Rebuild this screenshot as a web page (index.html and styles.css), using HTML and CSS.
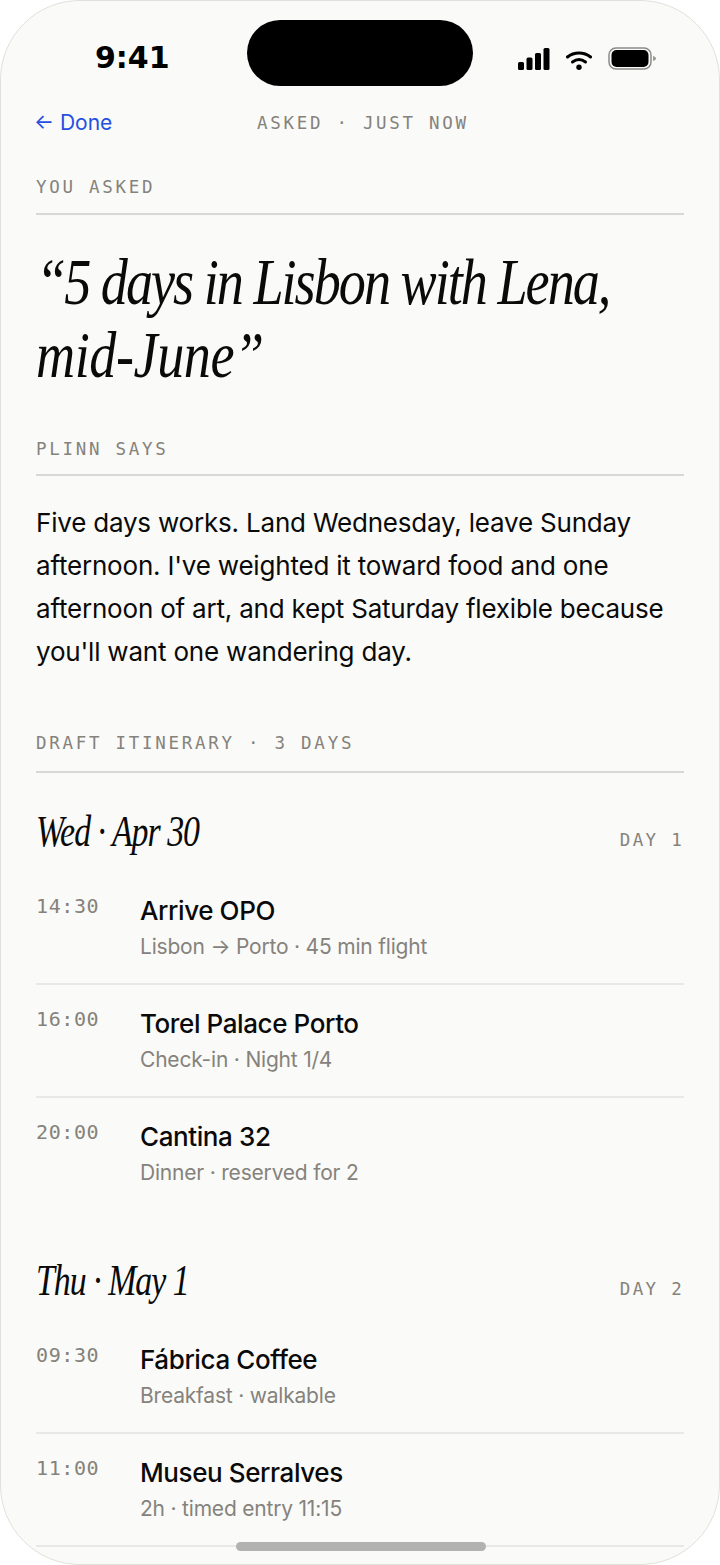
FILE: index.html
```html
<!doctype html>
<html>
<head>
<meta charset="utf-8">
<title>Plinn</title>
<link rel="stylesheet" href="styles.css">
</head>

<body>
<div class="phone">
	<div class="island"></div>
	<div class="status">
		<span class="clock">9:41</span>
		<div class="status_icons">
			<svg width="32" height="22" viewBox="0 0 32 22"><rect x="0" y="14" width="6" height="8" rx="1.500"/><rect x="8.500" y="9.500" width="6" height="12.500" rx="1.500"/><rect x="17" y="5" width="6" height="17" rx="1.500"/><rect x="25.500" y="0" width="6" height="22" rx="1.500"/></svg>
			<svg width="26" height="19" viewBox="0 0 26 19" fill="none" stroke="#000" stroke-width="3" stroke-linecap="round"><path d="M1.500 6C8 .5 18 .5 24.500 6"/><path d="M6.500 11C10.500 8 15.500 8 19.500 11"/><circle cx="13" cy="16.200" r="2.700" fill="#000" stroke="none"/></svg>
			<svg width="48" height="23" viewBox="0 0 48 23"><rect x="1" y="1" width="42" height="21" rx="7" fill="none" stroke="#8a8a88" stroke-width="1.500"/><rect x="3.500" y="3" width="37" height="17" rx="5"/><path d="M45 9c2 .5 3 1.300 3 2.500s-1 2-3 2.500z" fill="#9a9a98"/></svg>
		</div>
	</div>

	<div class="nav">
		<span class="done">← Done</span>
		<span class="nav_title">ASKED · JUST NOW</span>
	</div>

	<div class="label first">YOU ASKED</div>
	<h1 class="quote">“5 days in Lisbon with Lena, <span class="quote_end">mid-June”</span></h1>

	<div class="label says">PLINN SAYS</div>
	<p class="reply">Five days works. Land Wednesday, leave Sunday afternoon. I've weighted it toward food and one afternoon of art, and kept Saturday flexible because you'll want one wandering day.</p>

	<div class="label draft">DRAFT ITINERARY · 3 DAYS</div>

	<div class="day_head">
		<span class="day_name">Wed · Apr 30</span>
		<span class="day_num">DAY 1</span>
	</div>
	<ul class="items">
		<li><span class="time">14:30</span><div><div class="name">Arrive OPO</div><div class="sub">Lisbon → Porto · 45 min flight</div></div></li>
		<li><span class="time">16:00</span><div><div class="name">Torel Palace Porto</div><div class="sub">Check-in · Night 1/4</div></div></li>
		<li class="last"><span class="time">20:00</span><div><div class="name">Cantina 32</div><div class="sub">Dinner · reserved for 2</div></div></li>
	</ul>

	<div class="day_head second">
		<span class="day_name">Thu · May 1</span>
		<span class="day_num">DAY 2</span>
	</div>
	<ul class="items">
		<li><span class="time">09:30</span><div><div class="name">Fábrica Coffee</div><div class="sub">Breakfast · walkable</div></div></li>
		<li><span class="time">11:00</span><div><div class="name">Museu Serralves</div><div class="sub">2h · timed entry 11:15</div></div></li>
	</ul>

	<div class="home_bar"></div>
</div>
</body>
</html>
```

FILE: styles.css
```css
*{ padding:0; margin:0; box-sizing:border-box;}
html,body{ width:720px; height:1565px; overflow:hidden; background-color:#fff;}
ul{ list-style:none;}
.phone{ width:720px; height:1565px; position:relative; overflow:hidden; background-color:#fafaf8; border:1px solid #e0e0dc; border-radius:80px; padding:0 35px; font-family:"Inter","Liberation Sans",sans-serif; color:#0a0a0a;}

.island{ position:absolute; left:246px; top:19px; width:226px; height:66px; border-radius:33px; background-color:#000;}
.status{ height:98px; display:flex; justify-content:space-between; align-items:center; padding:14px 0 0 59px;}
.clock{ font-family:"DejaVu Sans",sans-serif; font-weight:bold; font-size:30px; letter-spacing:0; color:#000;}
.status_icons{ display:flex; align-items:flex-end; gap:16px; margin:3px 28px 0 0;}

.nav{ height:46px; position:relative; display:flex; align-items:center;}
.done{ font-size:21px; margin-left:-2px; color:#2450e0;}
.nav_title{ position:absolute; left:221px; top:14px; font-family:"DejaVu Sans Mono",monospace; font-size:17.5px; letter-spacing:2.7px; color:#85827c; white-space:nowrap;}

.label{ font-family:"DejaVu Sans Mono",monospace; font-size:17.5px; letter-spacing:2.72px; color:#85827c; border-bottom:2px solid #d8d8d4; line-height:24px; padding-bottom:14px;}
.first{ margin-top:30px;}
.says{ margin-top:46px; padding-bottom:13px;}
.draft{ margin-top:58px; padding-bottom:16px;}

.quote{ width:780px; transform:scaleX(.82); transform-origin:left top; font-family:"Liberation Serif",serif; font-style:italic; font-weight:normal; font-size:66px; line-height:73px; letter-spacing:-2.4px; padding-top:30px; color:#0a0a0a;}
.quote_end{ letter-spacing:-.5px;}
.reply{ font-size:26px; line-height:43px; padding-top:25px; letter-spacing:-.2px; color:#0a0a0a;}

.day_head{ display:flex; justify-content:space-between; align-items:baseline; margin-top:32px; margin-bottom:13px;}
.second{ margin-top:43px;}
.day_name{ display:inline-block; transform:scaleX(.77); transform-origin:left top; font-family:"Liberation Serif",serif; font-style:italic; font-size:44px; line-height:54px; letter-spacing:-1.300px;}
.day_num{ font-family:"DejaVu Sans Mono",monospace; font-size:17.5px; letter-spacing:2.3px; color:#85827c;}

.items li{ display:flex; border-bottom:2px solid #e8e8e5; height:113px; padding-top:21px;}
.items li.last{ border-bottom:0;}
.time{ width:104px; flex:none; font-family:"DejaVu Sans Mono",monospace; font-size:20px; letter-spacing:.6px; color:#85827c; line-height:26px;}
.name{ font-size:26px; line-height:36px; letter-spacing:-.4px; font-weight:500;}
.sub{ font-size:21px; line-height:36px; letter-spacing:-.2px; color:#85827c;}

.home_bar{ position:absolute; left:235px; bottom:13px; width:250px; height:9px; border-radius:5px; background-color:#b2b2b0;}
```
